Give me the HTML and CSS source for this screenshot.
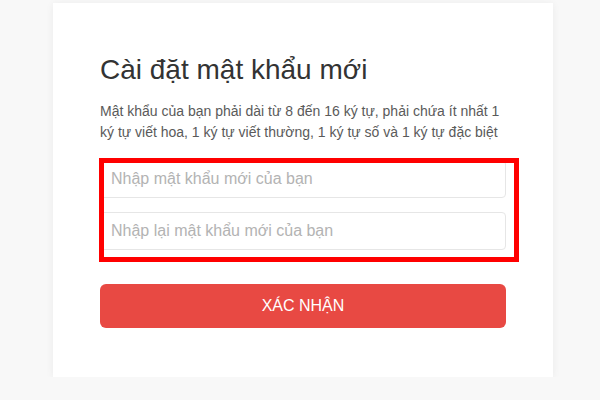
FILE: index.html
```html
<!DOCTYPE html>
<html lang="vi">
<head>
    <meta charset="UTF-8">
    <meta name="viewport" content="width=device-width, initial-scale=1.0">
    <title>Cài đặt mật khẩu mới</title>
    <link rel="stylesheet" href="styles.css">
</head>
<body>
    <div class="card">
        <h1>Cài đặt mật khẩu mới</h1>
        <p class="hint">Mật khẩu của bạn phải dài từ 8 đến 16 ký tự, phải chứa ít nhất 1 ký tự viết hoa, 1 ký tự viết thường, 1 ký tự số và 1 ký tự đặc biệt</p>

        <!-- khung đỏ đánh dấu hai ô nhập -->
        <div class="fields">
            <input type="password" placeholder="Nhập mật khẩu mới của bạn">
            <input type="password" placeholder="Nhập lại mật khẩu mới của bạn">
        </div>

        <button class="submit">XÁC NHẬN</button>
    </div>
</body>
</html>
```

FILE: styles.css
```css
body {
    font-family: "Liberation Sans", Arial, sans-serif;
    margin: 0;
    padding: 3px 0 0;
    background: #f8f8f8;
    color: #333;
}
.card {
    width: 500px;
    height: 374px;
    margin-left: 53px;
    padding: 50px 47px 0;
    box-sizing: border-box;
    background: white;
    box-shadow: 0 1px 8px rgba(0, 0, 0, 0.06);
}
h1 {
    font-size: 28px;
    font-weight: normal;
    line-height: 34px;
    margin: 0;
    color: #333;
}
.hint {
    font-size: 14px;
    line-height: 21px;
    margin: 14px 0 0;
    color: #5a5a5a;
}
.fields {
    position: relative;
    display: flex;
    flex-direction: column;
    gap: 14px;
    margin-top: 17px;
}
.fields::after {
    content: "";
    position: absolute;
    top: -2px;
    left: -1px;
    right: -13px;
    bottom: -12px;
    border: 5px solid #f00;
}
.fields input {
    height: 38px;
    padding: 0 10px;
    border: 1px solid #e6e6e6;
    border-radius: 4px;
    box-sizing: border-box;
    font-family: inherit;
    font-size: 16px;
    color: #333;
}
.fields input::placeholder {
    color: #b3b3b3;
}
.submit {
    display: block;
    width: 100%;
    height: 44px;
    margin-top: 34px;
    background: #e84943;
    color: white;
    border: none;
    border-radius: 6px;
    font-family: inherit;
    font-size: 16px;
    cursor: pointer;
}
```
